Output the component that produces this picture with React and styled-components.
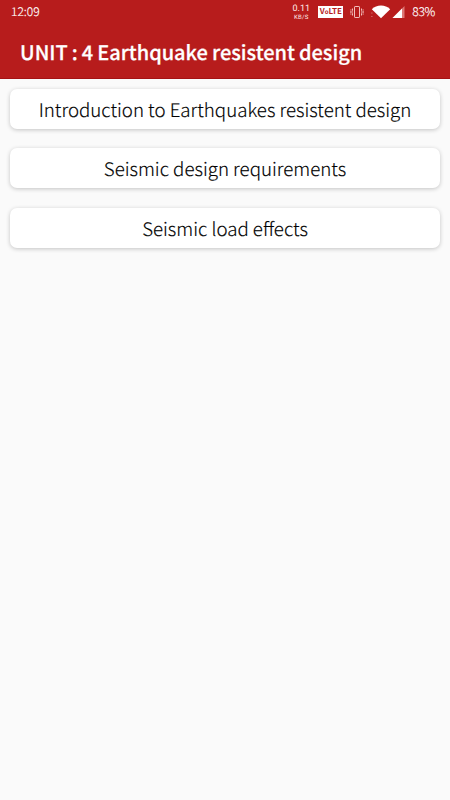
import React from "react";
import styled, { createGlobalStyle } from "styled-components";

const topics = [
  { id: 1, title: "Introduction to Earthquakes resistent design" },
  { id: 2, title: "Seismic design requirements" },
  { id: 3, title: "Seismic load effects" },
];

const App = () => {
  return (
    <Screen>
      <GlobalStyle />
      <Header>
        <StatusBar>
          <Clock>12:09</Clock>
          <StatusIcons>
            <Speed>
              <SpeedValue>0.11</SpeedValue>
              <SpeedUnit>KB/S</SpeedUnit>
            </Speed>
            <VolteBadge>
              V<SmallO>o</SmallO>
              <span>LTE</span>
            </VolteBadge>
            <VibrateIcon />
            <WifiIcon />
            <SignalIcon />
            <Battery>83%</Battery>
          </StatusIcons>
        </StatusBar>
        <Title>UNIT : 4 Earthquake resistent design</Title>
      </Header>
      <TopicList>
        {topics.map((topic) => (
          <TopicCard key={topic.id}>
            <TopicText>{topic.title}</TopicText>
          </TopicCard>
        ))}
      </TopicList>
    </Screen>
  );
};

const VibrateIcon = () => (
  <Vibrate width="14" height="12" viewBox="0 0 14 12" fill="none" stroke="#f2bfbc">
    <rect x="4.5" y="0.5" width="5" height="11" rx="0.6" />
    <path d="M2.5 2.5v2l-.7 1.5.7 1.5v2M11.5 2.5v2l.7 1.5-.7 1.5v2" />
    <path d="M.9 3v1.5L.3 6l.6 1.5V9M13.1 3v1.5l.6 1.5-.6 1.5V9" strokeWidth="0.6" />
  </Vibrate>
);

const WifiIcon = () => (
  <Wifi width="20" height="14" viewBox="0 0 20 14">
    <path d="M10 13.3.8 4.2C3.3 1.7 6.5.5 10 .5s6.7 1.2 9.2 3.7z" fill="#fff" />
    <path d="M.4 8h1M.4 11.5h1" stroke="#dd8583" />
  </Wifi>
);

const SignalIcon = () => (
  <Signal width="13" height="12" viewBox="0 0 13 12">
    <path d="M12.5 0v12H.5z" fill="#dc7775" />
    <path d="M10 2.5V12H.5z" fill="#fff" />
  </Signal>
);

const GlobalStyle = createGlobalStyle`
  * {
    box-sizing: border-box;
  }

  body {
    margin: 0;
    background: #fafafa;
    font-family: "Noto Sans CJK SC", "Noto Sans", sans-serif;
    text-rendering: geometricPrecision;
  }
`;

const Screen = styled.div`
  width: 100%;
  height: 800px;
  overflow: hidden;
  background: #fafafa;
`;

const Header = styled.header`
  height: 79px;
  background: #b71c1c;
  border-bottom: 1px solid #a51214;
  color: #fff;
`;

const StatusBar = styled.div`
  display: flex;
  align-items: center;
  justify-content: space-between;
  height: 24px;
  padding: 0 15px 0 11px;
`;

const Clock = styled.span`
  height: 24px;
  font-size: 12px;
  line-height: 23px;
  font-weight: 300;
  color: #fff;
  -webkit-text-stroke: 0.15px #fff;
`;

const StatusIcons = styled.div`
  display: flex;
  align-items: center;
  height: 24px;
`;

const Speed = styled.div`
  display: flex;
  flex-direction: column;
  align-items: center;
  width: 18px;
  padding-top: 2px;
  margin-right: 8px;
  color: #ffe9e8;
`;

const SpeedValue = styled.span`
  font-family: Roboto, sans-serif;
  font-size: 9px;
  line-height: 9px;
`;

const SpeedUnit = styled.span`
  font-family: Roboto, sans-serif;
  font-size: 6px;
  line-height: 7px;
  letter-spacing: 0.2px;
`;

const VolteBadge = styled.div`
  display: flex;
  align-items: center;
  justify-content: center;
  width: 25px;
  height: 12px;
  margin-right: 7px;
  background: #fff;
  color: #b71c1c;
  font-size: 8px;
  line-height: 12px;
  font-weight: 700;
`;

const SmallO = styled.span`
  font-size: 6px;
`;

const Vibrate = styled.svg`
  margin-right: 7px;
`;

const Wifi = styled.svg`
  margin-right: 1px;
`;

const Signal = styled.svg`
  margin-right: 7px;
`;

const Battery = styled.span`
  height: 24px;
  font-size: 12px;
  line-height: 23px;
  font-weight: 300;
  letter-spacing: -0.3px;
  color: #fff;
  -webkit-text-stroke: 0.15px #fff;
`;

const Title = styled.h1`
  margin: 0;
  padding: 0 20px;
  font-size: 20px;
  line-height: 56px;
  font-weight: 500;
  letter-spacing: -0.02px;
  word-spacing: -0.4px;
  -webkit-text-stroke: 0.25px #fff;
  white-space: nowrap;
`;

const TopicList = styled.main`
  display: flex;
  flex-direction: column;
  gap: 19.5px;
  padding: 9.9px 10px;
`;

const TopicCard = styled.div`
  display: flex;
  justify-content: center;
  height: 40px;
  border-radius: 7px;
  background: #fff;
  box-shadow: 0 1px 4px rgba(0, 0, 0, 0.22);
`;

const TopicText = styled.span`
  color: #000;
  font-size: 18.7px;
  line-height: 42px;
  font-weight: 300;
  -webkit-text-stroke: 0.15px #000;
  white-space: nowrap;
`;

export default App;
